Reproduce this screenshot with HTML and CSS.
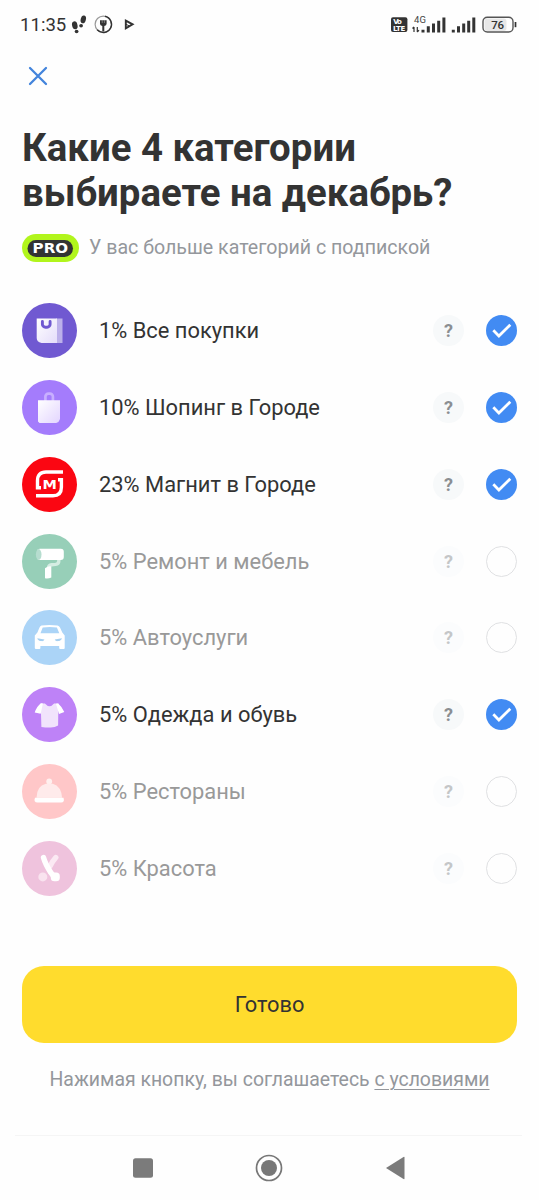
FILE: index.html
```html
<!DOCTYPE html>
<html lang="ru">
<head>
<meta charset="utf-8">
<meta name="viewport" content="width=device-width">
<title>Выбор категорий</title>
<link rel="stylesheet" href="styles.css">
</head>
<body>
<div class="screen">
  <header class="status">
    <span class="clock">11:35</span>
    <svg class="status-left" width="66" height="24" viewBox="70 13 66 24">
      <g fill="#333">
        <ellipse cx="74.8" cy="25.3" rx="2.7" ry="4" transform="rotate(-14 74.8 25.3)"/>
        <ellipse cx="76.6" cy="31.5" rx="1.9" ry="1.7"/>
        <ellipse cx="83.3" cy="19.4" rx="2.6" ry="4" transform="rotate(14 83.3 19.4)"/>
        <ellipse cx="81.1" cy="25.8" rx="1.9" ry="1.7"/>
        <path d="M100 20.3h6.6v3.5q0 2-2.3 2.3v5.4h-2v-5.4q-2.3-.3-2.3-2.3z"/>
      </g>
      <path d="M102.2 20v3M104.4 20v3" stroke="#aaa" stroke-width=".6"/>
      <circle cx="103.3" cy="24.3" r="8.2" fill="none" stroke="#999" stroke-width="1.2"/>
      <path d="M105 16.3a8.2 8.2 0 1 1-7.8 13.5" fill="none" stroke="#333" stroke-width="1.4"/>
      <path d="M125.8 20.7l6.8 3.6-6.8 4z" fill="none" stroke="#333" stroke-width="1.9"/>
      <path d="M125.8 24.2l3.4 1.7" stroke="#333"/>
    </svg>
    <svg class="status-right" width="129" height="24" viewBox="389 13 129 24">
      <rect x="391" y="17.3" width="16.4" height="14.8" rx="2" fill="#333"/>
      <g class="volte"><text x="393.3" y="24.3" textLength="8.5">Vo</text><text x="393" y="30.6" textLength="12.3">LTE</text></g>
      <text class="net" x="414" y="23" textLength="12">4G</text>
      <path d="M414 27v5M412.5 28.5l1.5-1.7M417.3 27v5M417.3 32l1.7-1.8" stroke="#333" stroke-width="1.2"/>
      <path d="M421.5 29.8h3v2.7h-3zM426.8 26.3h3v6.2h-3zM432 23.5h3v9h-3zM437.2 20.7h3v11.8h-3zM442.4 17.6h3v14.9h-3z" fill="#333"/>
      <path d="M451.8 29.8h3v2.7h-3zM457 26.3h3v6.2h-3zM462.2 23.5h3v9h-3zM467.2 20.7h3v11.8h-3zM472.3 17.6h3v14.9h-3z" fill="#333"/>
      <rect x="484.5" y="18.5" width="22" height="12.5" rx="3" fill="#e7e7e7"/>
      <rect x="483" y="17.2" width="30" height="14.8" rx="4.3" fill="none" stroke="#555" stroke-width="1.4"/>
      <path d="M515.5 22v5.2" stroke="#333" stroke-width="1.7"/>
      <text class="battery" x="491.3" y="29.1" textLength="12.8">76</text>
    </svg>
  </header>

  <button class="close" aria-label="Закрыть">
    <svg width="20" height="20" viewBox="0 0 20 20"><path d="M2 2l16 16M18 2L2 18" stroke="#4384dc" stroke-width="2.3" stroke-linecap="round"/></svg>
  </button>

  <h1 class="title">Какие 4 категории<br>выбираете на декабрь?</h1>

  <div class="subscription">
    <svg class="pro" width="57" height="28" viewBox="0 0 57 28">
      <rect width="57" height="28" rx="14" fill="#b1f51c"/>
      <rect x="5.5" y="6" width="45.5" height="17" rx="8.5" fill="#333"/>
      <text x="10.6" y="19.2" textLength="35.5" lengthAdjust="spacingAndGlyphs">PRO</text>
    </svg>
    <span class="subtitle">У вас больше категорий с подпиской</span>
  </div>

  <ul class="categories">
    <li class="row">
      <svg class="icon" viewBox="0 0 55 55"><defs><linearGradient id="bag" x2="1" y2="1"><stop stop-color="#fff"/><stop offset="1" stop-color="#e4dcfa"/></linearGradient></defs><circle cx="27.5" cy="27.5" r="27.5" fill="#7059d1"/><path d="M34 15.5h6.5V40H34z" fill="#bcb0ea"/><path d="M14.7 15.5H35V40H19.5q-4.8-1-4.8-5z" fill="url(#bag)"/><path d="M20.4 18.5v2.7a3 3 0 0 0 3 3h1.7a3 3 0 0 0 3-3v-2.7" fill="none" stroke="#7059d1" stroke-width="2.9" stroke-linecap="round"/></svg>
      <span class="name">1% Все покупки</span><span class="help">?</span>
      <svg class="check" viewBox="0 0 31 31"><circle cx="15.5" cy="15.5" r="15.5"/><path d="M7.3 15.3l5.6 5.7L24.3 9.8"/></svg>
    </li>
    <li class="row">
      <svg class="icon" viewBox="0 0 55 55"><defs><linearGradient id="shop" x2="1" y2="1"><stop stop-color="#fff"/><stop offset="1" stop-color="#e3d5ff"/></linearGradient></defs><circle cx="27.5" cy="27.5" r="27.5" fill="#a47cfc"/><path d="M23.4 21v-4.4a3 3 0 0 1 3-3h1.5a3 3 0 0 1 3 3V21" fill="none" stroke="#c8afff" stroke-width="2.7"/><path d="M16 20.2h22V39q-.7 3-3.8 4H17.5L16 41.5z" fill="url(#shop)"/></svg>
      <span class="name">10% Шопинг в Городе</span><span class="help">?</span>
      <svg class="check" viewBox="0 0 31 31"><circle cx="15.5" cy="15.5" r="15.5"/><path d="M7.3 15.3l5.6 5.7L24.3 9.8"/></svg>
    </li>
    <li class="row">
      <svg class="icon" viewBox="0 0 55 55"><circle cx="27.5" cy="27.5" r="27.5" fill="#fb0612"/><path d="M41 15H24q-8.5 0-8.5 8.5v7.3H19M14 38.8h17q8.4 0 8.4-8.5v-7.5H36" fill="none" stroke="#fff" stroke-width="3.4"/><text class="magnit" x="20.4" y="31.6" textLength="14.4" lengthAdjust="spacingAndGlyphs">M</text></svg>
      <span class="name">23% Магнит в Городе</span><span class="help">?</span>
      <svg class="check" viewBox="0 0 31 31"><circle cx="15.5" cy="15.5" r="15.5"/><path d="M7.3 15.3l5.6 5.7L24.3 9.8"/></svg>
    </li>
    <li class="row off">
      <svg class="icon" viewBox="0 0 55 55"><circle cx="27.5" cy="27.5" r="27.5" fill="#97cfb8"/><path d="M36.8 25v2q0 3-3.2 3.4l-4 .3q-3 .3-3 3" fill="none" stroke="#d5ede3" stroke-width="3.4"/><path d="M23 34.2q3-2.4 6.3-1.8v11.2q-3 1.4-6.3.7z" fill="#fff"/><rect x="15" y="14.8" width="26.8" height="11.3" rx="3" fill="#fff"/><ellipse cx="16.7" cy="20.4" rx="2.8" ry="5.3" fill="#b6ddcf"/></svg>
      <span class="name">5% Ремонт и мебель</span><span class="help">?</span><span class="empty"></span>
    </li>
    <li class="row off">
      <svg class="icon" viewBox="0 0 55 55"><circle cx="27.5" cy="27.5" r="27.5" fill="#abd4f7"/><path fill-rule="evenodd" d="M19.5 15.5q8-1 16 0 1.7.3 2.5 2l2.3 5 2.4 3V38q0 1-1 1h-3.5q-1 0-1-1v-2H18.4v2q0 1-1 1H14q-1.2 0-1.2-1V25.6l2.6-3 2.1-5q.7-1.8 2-2.1zM20.7 17.5l-2.2 5.8h18.8l-2.4-5.8q-7-.8-14.2 0z" fill="#fff"/><path d="M15.3 28.2l7.2 1.2q-.8 2-3 1.7-3.6-.2-4.2-2.9zM39.9 28.2l-7.2 1.2q.8 2 3 1.7 3.6-.2 4.2-2.9z" fill="#a6d0f1"/></svg>
      <span class="name">5% Автоуслуги</span><span class="help">?</span><span class="empty"></span>
    </li>
    <li class="row">
      <svg class="icon" viewBox="0 0 55 55"><circle cx="27.5" cy="27.5" r="27.5" fill="#be82f7"/><path d="M18.7 16.6h4.2q4.6 5.4 9.2 0h4.3l-.3 22q-3.5 2.1-8 1.9-5.3-.1-8.7-.6z" fill="#f1e3fc"/><path d="M18.9 16.3q-4 3-6.2 9.2l6 1.2 2.2-10.2zM36.2 16.4q4.1 3.5 6.1 8.7l-5.3 2-3-10.3z" fill="#fff"/></svg>
      <span class="name">5% Одежда и обувь</span><span class="help">?</span>
      <svg class="check" viewBox="0 0 31 31"><circle cx="15.5" cy="15.5" r="15.5"/><path d="M7.3 15.3l5.6 5.7L24.3 9.8"/></svg>
    </li>
    <li class="row off">
      <svg class="icon" viewBox="0 0 55 55"><circle cx="27.5" cy="27.5" r="27.5" fill="#ffc7c8"/><circle cx="27.2" cy="17.4" r="2.9" fill="#fff0ef"/><path d="M14.5 33.7q.3-12 9.3-14h7q8.5 2.6 9.3 14z" fill="#ffebeb"/><path d="M13 33.7h28.5q1.4 4.7-2.4 4.7H15.5q-4.2 0-2.5-4.7z" fill="#fff"/></svg>
      <span class="name">5% Рестораны</span><span class="help">?</span><span class="empty"></span>
    </li>
    <li class="row off">
      <svg class="icon" viewBox="0 0 55 55"><circle cx="27.5" cy="27.5" r="27.5" fill="#efc3dd"/><path d="M33.8 16.5q-3.5 4-5.7 8.5" stroke="#fbe9f3" stroke-width="5.4" stroke-linecap="round"/><circle cx="20.8" cy="35.9" r="4.5" fill="#f9e3ef"/><path d="M21.5 16.5q1.8 6.5 7.2 15l3.5 4.5" fill="none" stroke="#fff" stroke-width="5.4" stroke-linecap="round"/><rect x="28.8" y="31.5" width="9" height="8.8" rx="3.6" fill="#fff"/></svg>
      <span class="name">5% Красота</span><span class="help">?</span><span class="empty"></span>
    </li>
  </ul>

  <button class="done">Готово</button>
  <p class="terms">Нажимая кнопку, вы соглашаетесь <a>с условиями</a></p>

  <nav class="nav">
    <svg width="28" height="28" viewBox="0 0 28 28"><rect x="4" y="4.2" width="20" height="19.5" rx="2.5" fill="#7b7b7b"/></svg>
    <svg width="28" height="28" viewBox="0 0 28 28"><circle cx="14" cy="14" r="12.5" fill="none" stroke="#777" stroke-width="1.7"/><circle cx="14" cy="14" r="8" fill="#777"/></svg>
    <svg width="28" height="28" viewBox="0 0 28 28"><path d="M5 14L22.5 3q1-.5 1 .5v21q0 1-1 .5z" fill="#7b7b7b"/></svg>
  </nav>
</div>
</body>
</html>
```
FILE: styles.css
```css
* { box-sizing: border-box; }
body { margin: 0; background: #fefefe; font-family: Roboto, sans-serif; color: #333; }
button { border: 0; padding: 0; background: none; font: inherit; color: inherit; }
svg { display: block; flex: none; }
.screen { width: 539px; height: 1200px; display: flex; flex-direction: column; overflow: hidden; padding: 0 22px; }

.status { height: 24px; margin: 13px 0 0 -2px; display: flex; align-items: center; flex: none; }
.clock { width: 50px; font-size: 18.6px; line-height: 24px; white-space: nowrap; }
.status-right { margin-left: auto; margin-right: -1px; }
.volte { fill: #fff; font: 700 7px "DejaVu Sans", sans-serif; }
.net { fill: #444; font-size: 9.5px; }
.battery { fill: #333; font-size: 11.5px; font-weight: 500; }
.magnit { fill: #fff; font: 700 12px "DejaVu Sans", sans-serif; }

.close { align-self: flex-start; margin: 29px 0 0 6px; height: 20px; }

.title { margin: 40px 0 0; font-size: 38.4px; line-height: 44.5px; font-weight: 700; white-space: nowrap; }

.subscription { display: flex; align-items: center; gap: 10px; height: 28px; margin-top: 19px; }
.pro text { fill: #fff; font: 700 14px "DejaVu Sans", sans-serif; }
.subtitle { font-size: 19.6px; line-height: 24px; color: #94979c; white-space: nowrap; }

.categories { list-style: none; margin: 30.5px 0 0; padding: 0; flex: none; }
.row { height: 76.75px; display: flex; align-items: center; }
.icon { width: 55px; height: 55px; margin-right: 22px; }
.name { flex: 1; font-size: 21.88px; line-height: 28px; padding-top: 1px; white-space: nowrap; }
.help { width: 31px; height: 31px; margin-right: 22px; border-radius: 50%; background: #f7f9fa; color: #8b8e92; font-size: 18px; font-weight: 700; line-height: 31px; text-align: center; }
.check { width: 31px; height: 31px; }
.check circle { fill: #428bf3; }
.check path { fill: none; stroke: #fff; stroke-width: 2.8; }
.empty { width: 31px; height: 31px; border: 1.3px solid #e0e1e3; border-radius: 50%; }
.off .name { color: #999; }
.off .help { background: #fbfcfd; color: #c4c6c8; }

.done { flex: none; height: 77px; margin-top: 59.5px; border-radius: 22px; background: #ffdc2d; font-size: 21.8px; }
.terms { margin: 25px 0 0; font-size: 19.43px; line-height: 24px; color: #94979c; text-align: center; white-space: nowrap; }
.terms a { text-decoration: underline; text-decoration-thickness: 1px; text-underline-offset: 3px; }

.nav { margin: 43px -5px 0 -7px; height: 64px; border-top: 1px solid #f5f5f5; display: flex; justify-content: center; gap: 98px; align-items: center; }
```
